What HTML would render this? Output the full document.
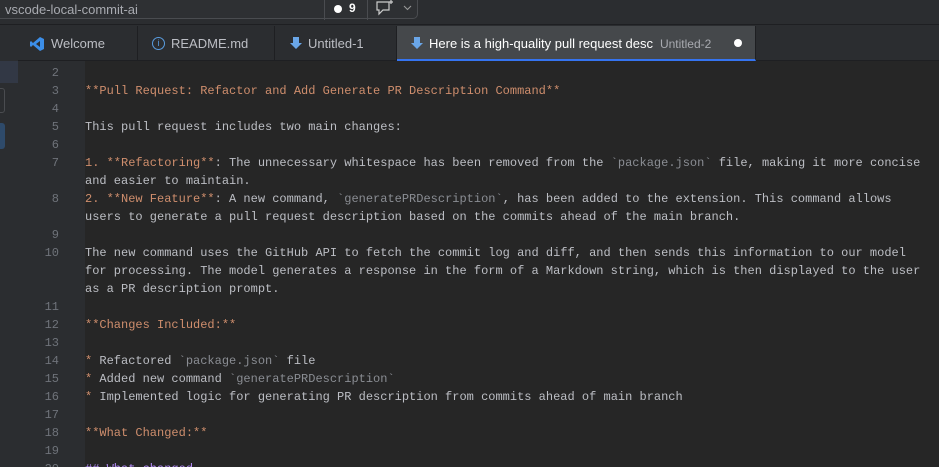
<!DOCTYPE html><html style="overflow:hidden;height:467px"><head><style>
*{margin:0;padding:0;box-sizing:border-box}
body{width:939px;height:467px;overflow:hidden;background:#2b2d30;font-family:"Liberation Sans",sans-serif;position:relative}
.title{position:absolute;left:0;top:0;width:939px;height:25px;background:#2b2d30;border-bottom:1px solid #1e1f22}
.search{position:absolute;left:-10px;top:-6px;width:428px;height:25px;border:1px solid #4a4c50;border-radius:5px;background:#2e3033}
.tabs{position:absolute;left:18px;top:26px;width:921px;height:35px;background:#2b2d30;border-bottom:1px solid #1e1f22}
.tab{position:absolute;top:0;height:35px;border-right:1px solid #1e1f22;color:#bcbec4;font-size:13px;line-height:35px}
.tab .t{position:absolute;top:0}
.tab.act{background:#45484b;color:#fff;border-bottom:2px solid #3574f0}
.left{position:absolute;left:0;top:61px;width:18px;height:406px;background:#2b2d30}
.gutter{position:absolute;left:18px;top:61px;width:67px;height:406px;background:#2b2d30}
.ed{position:absolute;left:85px;top:61px;width:854px;height:406px;background:#262626}
.row{position:absolute;height:18px;line-height:18px;font-family:"Liberation Mono",monospace;font-size:12px;white-space:pre}
.ln{left:18px;width:41px;text-align:right;color:#6f737a}
.tx{left:85px;color:#bcbec4}
.o{color:#cf8e6d}.g{color:#8a8d93}.p{color:#b189f5}
.ico{position:absolute;top:10px}
</style></head><body>
<div class="title"><div class="search"><span style="position:absolute;left:14px;top:7px;font-size:13px;color:#a8aab0">vscode-local-commit-ai</span>
<div style="position:absolute;left:333px;top:5px;width:1px;height:20px;background:#4a4c50"></div>
<div style="position:absolute;left:343px;top:10px;width:8px;height:8px;border-radius:50%;background:#fff"></div>
<span style="position:absolute;left:358px;top:6px;font-size:12px;font-weight:bold;color:#fff">9</span>
<div style="position:absolute;left:376px;top:5px;width:1px;height:20px;background:#4a4c50"></div>
<svg style="position:absolute;left:383px;top:4px" width="22" height="18"><path d="M3 3h12v8H9l-4 4v-4H3z" fill="none" stroke="#ccc" stroke-width="1.2"/><path d="M17 1v4M15 3h4" stroke="#ccc" stroke-width="1.2"/></svg>
<svg style="position:absolute;left:412px;top:10px" width="9" height="6"><path d="M1 1l3.5 3.5L8 1" fill="none" stroke="#999" stroke-width="1.1"/></svg></div></div>
<div class="tabs">
<div class="tab" style="left:0;width:120px"><svg class="ico" style="left:11px" width="16" height="16"><path d="M11 1l4 2v10l-4 2L4 9l-2 2-1-1V6l1-1 2 2zM11 5L7 8l4 3z" fill="#3c8ee8"/></svg><span class="t" style="left:33px">Welcome</span></div>
<div class="tab" style="left:120px;width:137px"><span class="ico" style="left:14px;top:11px;width:13px;height:13px;border:1px solid #5a9de0;border-radius:50%;font-size:9px;line-height:11px;text-align:center;color:#5a9de0">i</span><span class="t" style="left:33px">README.md</span></div>
<div class="tab" style="left:257px;width:122px"><svg class="ico" style="left:15px" width="12" height="14"><path d="M3 1h6v6h3L6 13 0 7h3z" fill="#6aa6e8"/></svg><span class="t" style="left:33px">Untitled-1</span></div>
<div class="tab act" style="left:379px;width:359px"><svg class="ico" style="left:14px" width="12" height="14"><path d="M3 1h6v6h3L6 13 0 7h3z" fill="#6aa6e8"/></svg><span class="t" style="left:32px">Here is a high-quality pull request desc <span style="color:#a8aab0;font-size:12px">&nbsp;Untitled-2</span></span><span style="position:absolute;left:337px;top:13px;width:8px;height:8px;border-radius:50%;background:#fff"></span></div>
</div>
<div class="left"><div style="position:absolute;left:0;top:0;width:18px;height:22px;background:#323845"></div>
<div style="position:absolute;left:-6px;top:27px;width:11px;height:25px;border:1px solid #4a4c50;border-radius:3px"></div>
<div style="position:absolute;left:-6px;top:62px;width:11px;height:26px;background:#2e4a6a;border-radius:3px"></div></div>
<div class="gutter"></div><div class="ed"></div>
<div class="row ln" style="top:64px">2</div>
<div class="row ln" style="top:82px">3</div><div class="row tx o" style="top:82px">**Pull Request: Refactor and Add Generate PR Description Command**</div>
<div class="row ln" style="top:100px">4</div>
<div class="row ln" style="top:118px">5</div><div class="row tx" style="top:118px">This pull request includes two main changes:</div>
<div class="row ln" style="top:136px">6</div>
<div class="row ln" style="top:154px">7</div><div class="row tx" style="top:154px"><span class="o">1. **Refactoring**</span>: The unnecessary whitespace has been removed from the <span class="g">`package.json`</span> file, making it more concise</div>
<div class="row tx" style="top:172px">and easier to maintain.</div>
<div class="row ln" style="top:190px">8</div><div class="row tx" style="top:190px"><span class="o">2. **New Feature**</span>: A new command, <span class="g">`generatePRDescription`</span>, has been added to the extension. This command allows</div>
<div class="row tx" style="top:208px">users to generate a pull request description based on the commits ahead of the main branch.</div>
<div class="row ln" style="top:226px">9</div>
<div class="row ln" style="top:244px">10</div><div class="row tx" style="top:244px">The new command uses the GitHub API to fetch the commit log and diff, and then sends this information to our model</div>
<div class="row tx" style="top:262px">for processing. The model generates a response in the form of a Markdown string, which is then displayed to the user</div>
<div class="row tx" style="top:280px">as a PR description prompt.</div>
<div class="row ln" style="top:298px">11</div>
<div class="row ln" style="top:316px">12</div><div class="row tx o" style="top:316px">**Changes Included:**</div>
<div class="row ln" style="top:334px">13</div>
<div class="row ln" style="top:352px">14</div><div class="row tx" style="top:352px"><span class="o">*</span> Refactored <span class="g">`package.json`</span> file</div>
<div class="row ln" style="top:370px">15</div><div class="row tx" style="top:370px"><span class="o">*</span> Added new command <span class="g">`generatePRDescription`</span></div>
<div class="row ln" style="top:388px">16</div><div class="row tx" style="top:388px"><span class="o">*</span> Implemented logic for generating PR description from commits ahead of main branch</div>
<div class="row ln" style="top:406px">17</div>
<div class="row ln" style="top:424px">18</div><div class="row tx o" style="top:424px">**What Changed:**</div>
<div class="row ln" style="top:442px">19</div>
<div class="row ln" style="top:460px">20</div><div class="row tx p" style="top:460px">## What changed</div>
</body></html>
